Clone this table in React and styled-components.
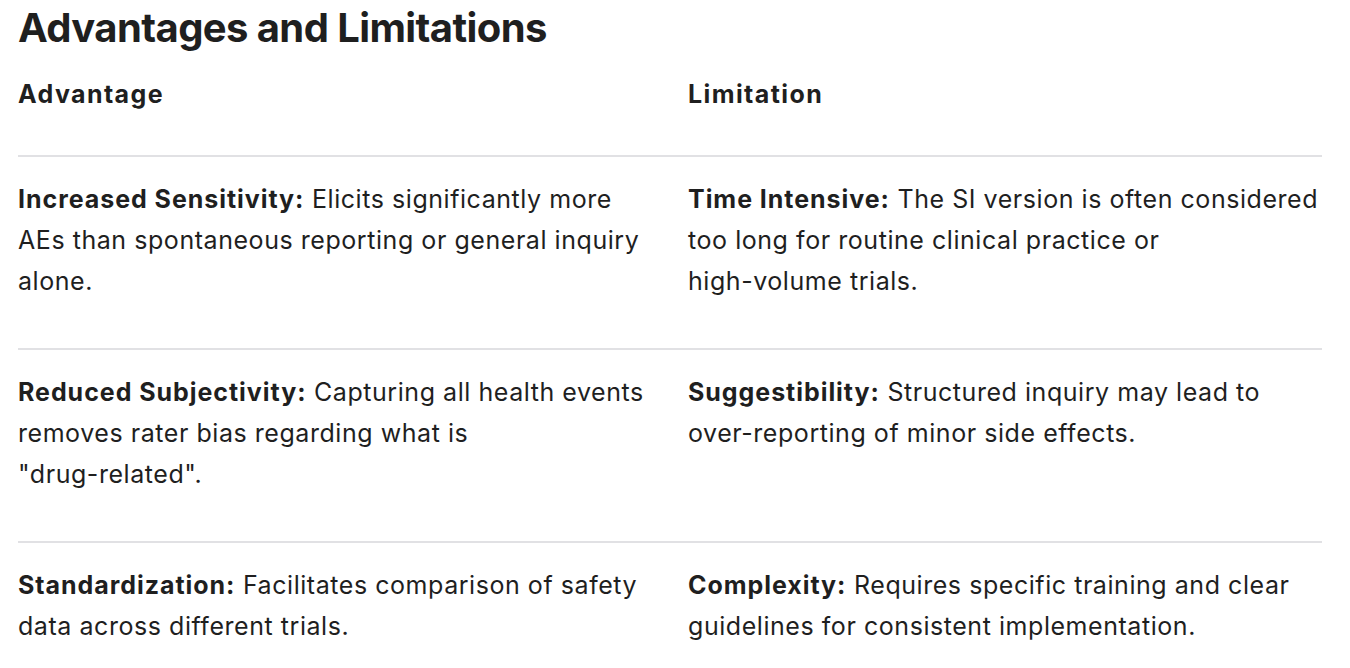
import React from "react"
import styled, { createGlobalStyle } from "styled-components"

const GlobalStyle = createGlobalStyle`
  html, body {
    margin: 0;
    padding: 0;
    background: #ffffff;
  }
  body {
    font-family: "Inter", "Liberation Sans", sans-serif;
    color: #1f1f1f;
  }
`

const Page = styled.div`
  padding: 0 28px 0 18px;
`

const Title = styled.h2`
  margin: 0;
  font-size: 40px;
  line-height: 56px;
  font-weight: 700;
  letter-spacing: -0.6px;
`

const Table = styled.div`
  display: grid;
  grid-template-columns: 670px 1fr;
  margin-top: 10px;
`

const HeadCell = styled.div`
  font-size: 25px;
  font-weight: 700;
  line-height: 41px;
  letter-spacing: 1.4px;
  padding: 8px 16px 40px 0;
  border-bottom: 2px solid #e1e1e4;
`

const Cell = styled.div`
  font-size: 25px;
  line-height: 41px;
  letter-spacing: 0.55px;
  padding: 22px ${props => props.$last ? '3px' : '32px'} 46px 0;
  border-bottom: ${props => props.$end ? 'none' : '2px solid #e1e1e4'};
`

const Label = styled.strong`
  font-weight: 700;
  letter-spacing: 0.95px;
`

const Keep = styled.span`
  white-space: nowrap;
`

const rows = [
  {
    adv: ['Increased Sensitivity:', 'Elicits significantly more AEs than spontaneous reporting or general inquiry alone.'],
    lim: ['Time Intensive:', <>The SI version is often considered too long for routine clinical practice or <Keep>high-volume</Keep> trials.</>],
  },
  {
    adv: ['Reduced Subjectivity:', <>Capturing all health events removes rater bias regarding what is <Keep>"drug-related"</Keep>.</>],
    lim: ['Suggestibility:', <>Structured inquiry may lead to <Keep>over-reporting</Keep> of minor side effects.</>],
  },
  {
    adv: ['Standardization:', 'Facilitates comparison of safety data across different trials.'],
    lim: ['Complexity:', 'Requires specific training and clear guidelines for consistent implementation.'],
  },
]

const App = () => {
  return (
    <Page>
      <GlobalStyle />
      <Title>Advantages and Limitations</Title>
      <Table>
        <HeadCell>Advantage</HeadCell>
        <HeadCell>Limitation</HeadCell>
        {rows.map((row, i) => (
          <React.Fragment key={i}>
            <Cell $end={i === rows.length - 1}>
              <Label>{row.adv[0]}</Label> {row.adv[1]}
            </Cell>
            <Cell $last $end={i === rows.length - 1}>
              <Label>{row.lim[0]}</Label> {row.lim[1]}
            </Cell>
          </React.Fragment>
        ))}
      </Table>
    </Page>
  )
}

export default App
